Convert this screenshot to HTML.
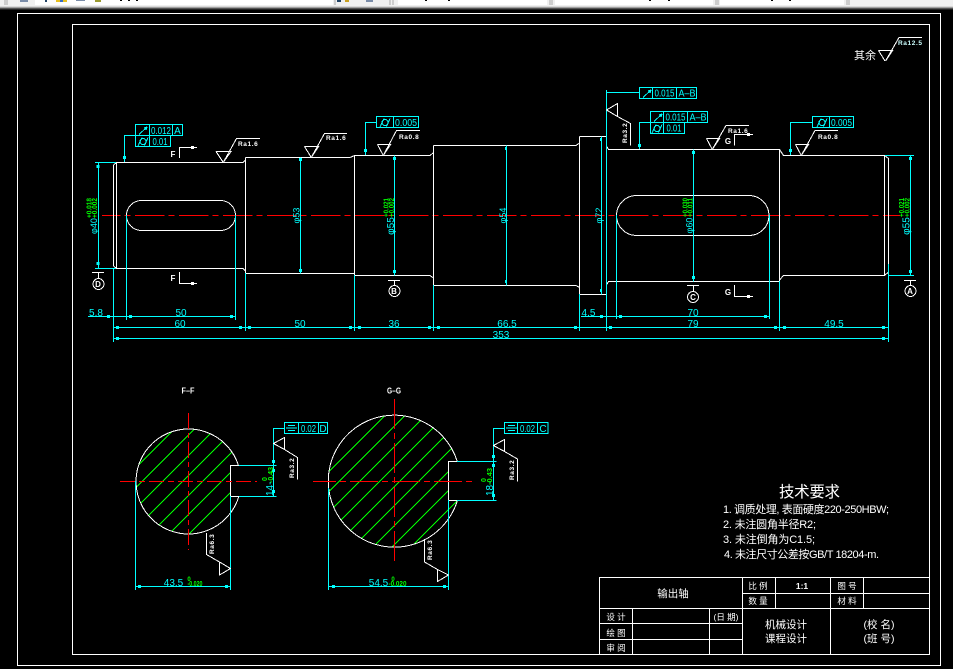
<!DOCTYPE html>
<html><head><meta charset="utf-8"><style>
html,body{margin:0;padding:0;background:#000;width:953px;height:669px;overflow:hidden}
svg{display:block;position:absolute;left:0;top:0}
text{font-family:"Liberation Sans","WenQuanYi Zen Hei","Noto Sans CJK SC",sans-serif}
.c{fill:#0ff;font-size:10px;text-anchor:middle}
.f{fill:#0ff;font-size:10px;text-anchor:middle}
.g{fill:#0f0;font-size:7px;font-weight:bold;text-anchor:middle}
.r{fill:#fff;font-size:6.5px;font-weight:bold;letter-spacing:.6px}
.w{fill:#fff;font-size:8px;font-weight:bold;text-anchor:middle}
.t{fill:#fff;font-size:8.5px;text-anchor:middle}
.m{fill:#fff;font-size:10.5px;text-anchor:middle}
.n{fill:#fff;font-size:11px}
.l{fill:none;stroke:#fff}
.y{fill:none;stroke:#0ff}
.v{fill:none;stroke:#0f0}
.k{fill:none;stroke:#f00}
</style></head><body>
<svg width="953" height="669" viewBox="0 0 953 669" shape-rendering="crispEdges">
<defs>
<g id="ro" fill="none" stroke="#0ff"><path d="M3 9.500L11 2M11 2L8 3M11 2L10 5"/></g>
<g id="cy" fill="none" stroke="#0ff"><circle cx="7" cy="5.500" r="3"/><path d="M2 10L6 1.500M8.500 9.500L12 1.500"/></g>
<g id="sy" fill="none" stroke="#0ff"><path d="M3.500 3H10.500M1.500 5.500H12.500M3.500 8H10.500"/></g>
<clipPath id="cf"><path d="M238.500 465.500A52.500 52.500 0 1 0 238.800 496.500L230.500 496.500L230.500 465.500Z"/></clipPath>
<clipPath id="cg"><path d="M457.300 461.500A66 66 0 1 0 457.400 500.500L448.500 500.500L448.500 461.500Z"/></clipPath>
</defs>

<!-- toolbar -->
<rect x="0" y="0" width="953" height="6" fill="#f0f0f0"/>
<rect x="35" y="0" width="298" height="5" fill="#fff"/>
<rect x="398" y="0" width="149" height="5" fill="#fff"/>
<rect x="555" y="0" width="158" height="5" fill="#fff"/>
<rect x="720" y="0" width="124" height="5" fill="#fff"/>
<rect x="0" y="6" width="953" height="1" fill="#d8d8d8"/>
<rect x="0" y="7" width="953" height="1" fill="#a0a0a0"/>
<rect x="0" y="8" width="953" height="1" fill="#555"/>
<rect x="0" y="9" width="953" height="1" fill="#222"/>
<path d="M5 0V5M7 0V5M335 0V5M390 0V5M393 0V5M550 0V5M552 0V5M716 0V5M718 0V5M847 0V5M849 0V5" stroke="#aaa"/>
<rect x="20" y="0" width="8" height="2" fill="#7a8ca8"/>
<rect x="45" y="0" width="2" height="2" fill="#246"/>
<rect x="56" y="0" width="4" height="2" fill="#e8c020"/><rect x="60" y="0" width="3" height="2" fill="#3a6ec0"/><rect x="63" y="0" width="4" height="2" fill="#e8c020"/>
<rect x="76" y="0" width="9" height="1" fill="#7a8ca8"/><rect x="95" y="0" width="6" height="2" fill="#9a9a30"/>
<path d="M120 0h2M128 0h2M136 0h2M425 0h2M448 0h2M649 0h2M668 0h2M771 0h2M789 0h2" stroke="#000" stroke-width="2"/>
<rect x="337" y="0" width="4" height="2" fill="#246"/><rect x="345" y="0" width="4" height="2" fill="#c8a020"/><rect x="366" y="0" width="7" height="2" fill="#7a8ca8"/>

<!-- frames -->
<rect x="17.500" y="13.500" width="923" height="652" class="l"/>
<rect x="72.500" y="24.500" width="857" height="630" class="l"/>

<!-- centerline -->
<path d="M102 215.500H900" class="k" stroke-dasharray="29.300 4 6 4.700" stroke-dashoffset="11"/>

<!-- shaft outline -->
<path class="l" d="M113.500 165V266M116.500 162.500V268.500M113.500 165L116.500 162.500M113.500 266L116.500 268.500
M116.500 162.500H243L245.500 160M116.500 268.500H243L245.500 271
M245.500 157.500V273.500M245.500 157.500H350L354.500 155.500H430L433.500 152.500M245.500 273.500H354.500M354.500 155.500V275.500H430L433.500 278
M433.500 145.500V285.500M433.500 145.500H576L579.500 143M433.500 285.500H576L579.500 287.500
M579.500 136.500V294.500M579.500 136.500H606.500M579.500 294.500H606.500M606.500 136.500V294.500M606.500 146L608.500 149.500H779.500V281.500H608.500L606.500 285
M779.500 149.500L783.500 155.500H884.500V275.500H783.500L779.500 280M884.500 155.500L888.500 158.500V272L884.500 275.500"/>
<rect x="126.500" y="200.500" width="109" height="30" rx="15" ry="15" class="l"/>
<rect x="616.500" y="195.500" width="152.500" height="40" rx="20" ry="20" class="l"/>

<!-- extension lines & dims -->
<path class="y" d="M95 162.500H116M95 268.500H116M98.500 162.500V268.500
M113.500 268V342M126.500 215V320M235.500 215V320M245.500 273V331M354.500 275V331M433.500 285V331M579.500 294V331M606.500 90V331M616.500 215V319M769.500 215V319M779.500 281V331M888.500 264V342
M88 316.500H235.500M113.500 327.500H779.500M113.500 338.500H888.500M581 316.500H769.500M779.500 327.500H888.500
M300.500 157.500V273.500M394.500 155.500V275.500M506.500 145.500V285.500M601.500 136.500V294.500M693.500 149.500V281.500M910.500 155.500V275.500M885 155.500H914M888 275.500H914"/>
<g fill="#0ff" shape-rendering="crispEdges">
<rect x="96.500" y="165" width="3" height="3"/><rect x="96.500" y="262" width="3" height="3"/>
<rect x="107" y="315" width="3" height="3"/><rect x="129" y="315" width="3" height="3"/><rect x="230" y="315" width="3" height="3"/>
<rect x="116" y="326" width="3" height="3"/><rect x="239" y="326" width="3" height="3"/><rect x="248" y="326" width="3" height="3"/><rect x="349" y="326" width="3" height="3"/>
<rect x="358" y="326" width="3" height="3"/><rect x="428" y="326" width="3" height="3"/><rect x="437" y="326" width="3" height="3"/><rect x="574" y="326" width="3" height="3"/>
<rect x="609" y="326" width="3" height="3"/><rect x="774" y="326" width="3" height="3"/><rect x="783" y="326" width="3" height="3"/><rect x="882" y="326" width="3" height="3"/>
<rect x="116" y="337" width="3" height="3"/><rect x="882" y="337" width="3" height="3"/>
<rect x="600" y="315" width="3" height="3"/><rect x="619" y="315" width="3" height="3"/><rect x="764" y="315" width="3" height="3"/>
<rect x="299" y="158" width="3" height="3"/><rect x="299" y="269" width="3" height="3"/>
<rect x="393" y="157" width="3" height="3"/><rect x="393" y="270" width="3" height="3"/>
<rect x="505" y="147" width="2" height="3"/><rect x="505" y="280" width="2" height="3"/>
<rect x="600" y="138" width="2" height="3"/><rect x="600" y="289" width="2" height="3"/>
<rect x="692" y="151" width="3" height="3"/><rect x="692" y="276" width="3" height="3"/>
<rect x="909" y="157" width="3" height="3"/><rect x="909" y="270" width="3" height="3"/>
<rect x="123" y="156" width="3" height="3"/><rect x="364" y="149" width="3" height="3"/><rect x="638" y="144" width="3" height="3"/><rect x="789" y="149" width="3" height="3"/>
</g>

<text class="c" x="96" y="316">5.8</text>
<text class="c" x="181" y="316">50</text>
<text class="c" x="180" y="327">60</text>
<text class="c" x="300" y="327">50</text>
<text class="c" x="394" y="327">36</text>
<text class="c" x="507" y="327">66.5</text>
<text class="c" x="501" y="338">353</text>
<text class="c" x="588.500" y="316">4.5</text>
<text class="c" x="693" y="316">70</text>
<text class="c" x="693" y="327">79</text>
<text class="c" x="834" y="327">49.5</text>

<!-- vertical dim labels -->
<text class="c" transform="rotate(-90 97 226)" x="97" y="226" style="font-size:9px">φ40</text>
<text class="g" transform="rotate(-90 91.500 208)" x="91.500" y="208" textLength="20" lengthAdjust="spacingAndGlyphs">+0.018</text>
<text class="g" transform="rotate(-90 97 208)" x="97" y="208" textLength="20" lengthAdjust="spacingAndGlyphs">+0.002</text>
<text class="c" transform="rotate(-90 299.500 215.500)" x="299.500" y="215.500" style="font-size:9px">φ53</text>
<text class="c" transform="rotate(-90 394 226)" x="394" y="226" style="font-size:10px">φ55</text>
<text class="g" transform="rotate(-90 388.500 207.500)" x="388.500" y="207.500" textLength="19" lengthAdjust="spacingAndGlyphs">+0.021</text>
<text class="g" transform="rotate(-90 394 207.500)" x="394" y="207.500" textLength="19" lengthAdjust="spacingAndGlyphs">+0.002</text>
<text class="c" transform="rotate(-90 506 215.500)" x="506" y="215.500" style="font-size:9px">φ54</text>
<text class="c" transform="rotate(-90 602 215.500)" x="602" y="215.500" style="font-size:9px">φ72</text>
<text class="c" transform="rotate(-90 692.500 225.500)" x="692.500" y="225.500" style="font-size:9px">φ60</text>
<text class="g" transform="rotate(-90 687.500 207.500)" x="687.500" y="207.500" textLength="19" lengthAdjust="spacingAndGlyphs">+0.030</text>
<text class="g" transform="rotate(-90 692.500 207.500)" x="692.500" y="207.500" textLength="19" lengthAdjust="spacingAndGlyphs">+0.011</text>
<text class="c" transform="rotate(-90 909.500 226)" x="909.500" y="226" style="font-size:10px">φ55</text>
<text class="g" transform="rotate(-90 904 207.500)" x="904" y="207.500" textLength="19" lengthAdjust="spacingAndGlyphs">+0.021</text>
<text class="g" transform="rotate(-90 909.500 207.500)" x="909.500" y="207.500" textLength="19" lengthAdjust="spacingAndGlyphs">+0.002</text>

<!-- feature frames -->
<path class="y" d="M135.500 124.500H182.500V135.500H135.500ZM135.500 135.500V146.500H170.500V135.500M149.500 124.500V146.500M172.500 124.500V135.500M135.500 135.500H124.500V162"/>
<use href="#ro" x="136" y="125"/><use href="#cy" x="136" y="136"/>
<text class="f" x="161" y="134" textLength="20" lengthAdjust="spacingAndGlyphs">0.012</text><text class="f" x="177.500" y="134">A</text>
<text class="f" x="160" y="145" textLength="15" lengthAdjust="spacingAndGlyphs">0.01</text>

<path class="y" d="M376.500 116.500H418.500V127.500H376.500ZM393.500 116.500V127.500M376.500 122.500H365.500V155"/>
<use href="#cy" x="378" y="117"/>
<text class="f" x="406" y="126" textLength="22" lengthAdjust="spacingAndGlyphs">0.005</text>

<path class="y" d="M606 92.500H639.500M639.500 87.500H696.500V98.500H639.500ZM652.500 87.500V98.500M676.500 87.500V98.500"/>
<use href="#ro" x="640" y="88"/>
<text class="f" x="664.500" y="96.500" textLength="20" lengthAdjust="spacingAndGlyphs">0.015</text><text class="f" x="687" y="96.500" textLength="17" lengthAdjust="spacingAndGlyphs">A–B</text>

<path class="y" d="M650.500 111.500H707.500V122.500H650.500ZM650.500 122.500V133.500H684.500V122.500M663.500 111.500V133.500M687.500 111.500V122.500M650.500 122.500H639.500V149"/>
<use href="#ro" x="651" y="112"/><use href="#cy" x="650" y="123"/>
<text class="f" x="675.500" y="120.500" textLength="20" lengthAdjust="spacingAndGlyphs">0.015</text><text class="f" x="698" y="120.500" textLength="17" lengthAdjust="spacingAndGlyphs">A–B</text>
<text class="f" x="674" y="131.500" textLength="15" lengthAdjust="spacingAndGlyphs">0.01</text>

<path class="y" d="M812.500 116.500H853.500V127.500H812.500ZM829.500 116.500V127.500M812.500 122.500H790.500V155"/>
<use href="#cy" x="815" y="117"/>
<text class="f" x="841.500" y="126" textLength="21" lengthAdjust="spacingAndGlyphs">0.005</text>

<!-- roughness -->
<path class="l" d="M216 151.500H231L223.500 162L236.500 138.500H260M216 151.500L223 162
M304.500 146.500H318.500L311.500 157L324.500 133.500H347M304.500 146.500L311 157
M377.500 144.500H390.500L383.500 155L396.500 130.500H420M377.500 144.500L383 155
M706.500 138.500H719.500L712.500 149L726 125.500H749M706.500 138.500L712 149
M795.500 144.500H808.500L801.500 155L815 130.500H838M795.500 144.500L801 155
M878.500 50.500H892.500L885.500 61L899 37.500H922M878.500 50.500L885 61
M606.500 110L617.500 103.500V116.500ZM617.500 116.500L630.500 123.500V145.500"/>
<text class="r" x="238" y="146">Ra1.6</text>
<text class="r" x="326" y="140">Ra1.6</text>
<text class="r" x="399" y="139">Ra0.8</text>
<text class="r" x="728" y="133">Ra1.6</text>
<text class="r" x="818" y="139">Ra0.8</text>
<text class="r" x="898" y="45" style="fill:#cff">Ra12.5</text>
<text x="854" y="59" style="fill:#fff;font-size:11px">其余</text>
<text class="r" transform="rotate(-90 627 143)" x="627" y="143">Ra3.2</text>

<!-- section arrows -->
<path class="l" d="M179.500 158V147.500H197M179.500 272V283.500H197M734.500 145.500V134.500H753M734.500 285V296.500H753"/>
<g fill="#fff"><rect x="191" y="146" width="3" height="3"/><rect x="191" y="282" width="3" height="3"/><rect x="747" y="133" width="3" height="3"/><rect x="747" y="295" width="3" height="3"/></g>
<text class="w" x="173" y="157">F</text><text class="w" x="173" y="281">F</text>
<text class="w" x="728" y="144">G</text><text class="w" x="728" y="295">G</text>

<!-- datums -->
<path class="l" d="M92 272.500H104M98.500 272.500V278M388 280.500H400M394.500 280.500V285M687 285.500H699M693.500 285.500V291M904 280.500H916M910.500 280.500V285"/>
<circle cx="98.500" cy="284" r="5.500" class="l"/><circle cx="394.500" cy="291" r="5.500" class="l"/><circle cx="693" cy="297" r="5.500" class="l"/><circle cx="910.500" cy="291" r="5.500" class="l"/>
<text class="w" x="98" y="287">D</text><text class="w" x="394" y="294">B</text><text class="w" x="693" y="300">C</text><text class="w" x="910" y="294">A</text>

<!-- F-F -->
<text class="w" x="188" y="393.500" textLength="13" lengthAdjust="spacingAndGlyphs">F–F</text>
<g clip-path="url(#cf)"><path class="v" d="M603.500 0L3.500 600M623.500 0L23.500 600M644 0L44 600M664 0L64 600M684 0L84 600M703 0L103 600M723 0L123 600"/></g>
<path class="l" d="M238.500 465.500A52.500 52.500 0 1 0 238.800 496.500M238.800 465.500H230.500V496.500H238.800"/>
<path class="k" d="M120 481.500H257" stroke-dasharray="15 4 6 4"/>
<path class="k" d="M188.500 413V550" stroke-dasharray="16 4 5 4"/>
<path class="y" d="M239 465.500H276.500M239 496.500H276.500M284.500 428.500H273.500V496M135.500 481V590M230.500 496V590M135.500 586.500H230.500M284.500 422.500H327.500V433.500H284.500ZM298.500 422.500V433.500M318.500 422.500V433.500"/>
<use href="#sy" x="284.500" y="422.500"/>
<g fill="#0ff"><rect x="272" y="460" width="3" height="3"/><rect x="272" y="469" width="3" height="3"/><rect x="272" y="490" width="3" height="3"/><rect x="138" y="585" width="3" height="3"/><rect x="225" y="585" width="3" height="3"/></g>
<text class="f" x="308.500" y="432" textLength="15" lengthAdjust="spacingAndGlyphs">0.02</text><text class="f" x="323" y="432">D</text>
<path class="l" d="M273.500 443.500L284.500 437.500V449.500ZM284.500 449.500L297.500 457.500V479.500M206.500 533V554.500L219.500 562M219.500 562V575L230.500 568.500Z"/>
<text class="r" transform="rotate(-90 294 478)" x="294" y="478">Ra3.2</text>
<text class="r" transform="rotate(-90 214 554)" x="214" y="554">Ra6.3</text>
<text class="c" transform="rotate(-90 273 496)" x="273" y="496" style="text-anchor:start;font-size:10px">14-</text>
<text class="g" transform="rotate(-90 273 483)" x="273" y="483" style="text-anchor:start;font-size:7px" textLength="16" lengthAdjust="spacingAndGlyphs">-0.43</text>
<text class="g" transform="rotate(-90 267 481)" x="267" y="481" style="text-anchor:start;font-size:7px">0</text>
<text class="c" x="173.500" y="586">43.5</text>
<text class="g" x="195" y="586" textLength="15" lengthAdjust="spacingAndGlyphs">-0.020</text>
<text class="g" x="189" y="581" style="font-size:6px">0</text>

<!-- G-G -->
<text class="w" x="394" y="393.500" textLength="14" lengthAdjust="spacingAndGlyphs">G–G</text>
<g clip-path="url(#cg)"><path class="v" d="M800.700 0L200.700 600M820.700 0L220.700 600M841 0L241 600M861 0L261 600M881 0L281 600M900 0L300 600M920 0L320 600M939 0L339 600M958 0L358 600"/></g>
<path class="l" d="M457.300 461.500A66 66 0 1 0 457.400 500.500M457.300 461.500H448.500V500.500H457.400"/>
<path class="k" d="M313 481.500H476" stroke-dasharray="28 4 6 4" stroke-dashoffset="5"/>
<path class="k" d="M394.500 399V563" stroke-dasharray="30 4 6 4"/>
<path class="y" d="M457 461.500H496.500M457 500.500H496.500M504.500 428.500H493.500V500M328.500 488V590M448.500 500V590M328.500 586.500H448.500M504.500 422.500H548V433.500H504.500ZM517.500 422.500V433.500M537.500 422.500V433.500"/>
<use href="#sy" x="504.500" y="422.500"/>
<g fill="#0ff"><rect x="492" y="455" width="3" height="3"/><rect x="492" y="464" width="3" height="3"/><rect x="492" y="494" width="3" height="3"/><rect x="332" y="585" width="3" height="3"/><rect x="443" y="585" width="3" height="3"/></g>
<text class="f" x="527.500" y="432" textLength="15" lengthAdjust="spacingAndGlyphs">0.02</text><text class="f" x="543" y="432">C</text>
<path class="l" d="M493.500 445.500L504.500 439.500V451.500ZM504.500 451.500L517.500 459V481.500M424.500 539V562L437.500 569.500M437.500 569.500V581.500L448.500 575Z"/>
<text class="r" transform="rotate(-90 514 480)" x="514" y="480">Ra3.2</text>
<text class="r" transform="rotate(-90 432 560)" x="432" y="560">Ra6.3</text>
<text class="c" transform="rotate(-90 493 496)" x="493" y="496" style="text-anchor:start;font-size:10px">18-</text>
<text class="g" transform="rotate(-90 492 485)" x="492" y="485" style="text-anchor:start;font-size:7px" textLength="17" lengthAdjust="spacingAndGlyphs">-0.43</text>
<text class="g" transform="rotate(-90 486 482)" x="486" y="482" style="text-anchor:start;font-size:7px">0</text>
<text class="c" x="378.500" y="586">54.5</text>
<text class="g" x="397.500" y="586" textLength="18" lengthAdjust="spacingAndGlyphs">-0.020</text>
<text class="g" x="393" y="581" style="font-size:6px">0</text>

<!-- notes -->
<text x="779" y="497" style="fill:#fff;font-size:15.500px" textLength="61">技术要求</text>
<text class="n" x="723" y="513" textLength="166">1. 调质处理, 表面硬度220-250HBW;</text>
<text class="n" x="723" y="528" textLength="93">2. 未注圆角半径R2;</text>
<text class="n" x="723" y="543" textLength="92">3. 未注倒角为C1.5;</text>
<text class="n" x="724" y="558" textLength="155">4. 未注尺寸公差按GB/T 18204-m.</text>

<!-- title block -->
<path class="l" d="M599.500 577.500H929.500V654.500H599.500ZM742.500 593.500H929.500M599.500 608.500H929.500M599.500 623.500H742.500M599.500 639.500H742.500M632.500 608.500V654.500M709.500 608.500V654.500M742.500 577.500V654.500M775.500 577.500V608.500M830.500 577.500V654.500M863.500 577.500V608.500"/>
<text class="m" x="673" y="597">输出轴</text>
<text class="t" x="758" y="589">比 例</text><text class="t" x="802" y="589" style="font-weight:bold">1:1</text><text class="t" x="847" y="589">图 号</text>
<text class="t" x="758" y="604">数 量</text><text class="t" x="847" y="604">材 料</text>
<text class="t" x="616" y="620">设 计</text><text class="t" x="616" y="636">绘 图</text><text class="t" x="616" y="651">审 阅</text>
<text class="t" x="726" y="620">(日 期)</text>
<text class="m" x="786" y="628">机械设计</text><text class="m" x="786" y="642">课程设计</text>
<text class="m" x="879" y="628">(校 名)</text><text class="m" x="879" y="642">(班 号)</text>
</svg>
</body></html>
